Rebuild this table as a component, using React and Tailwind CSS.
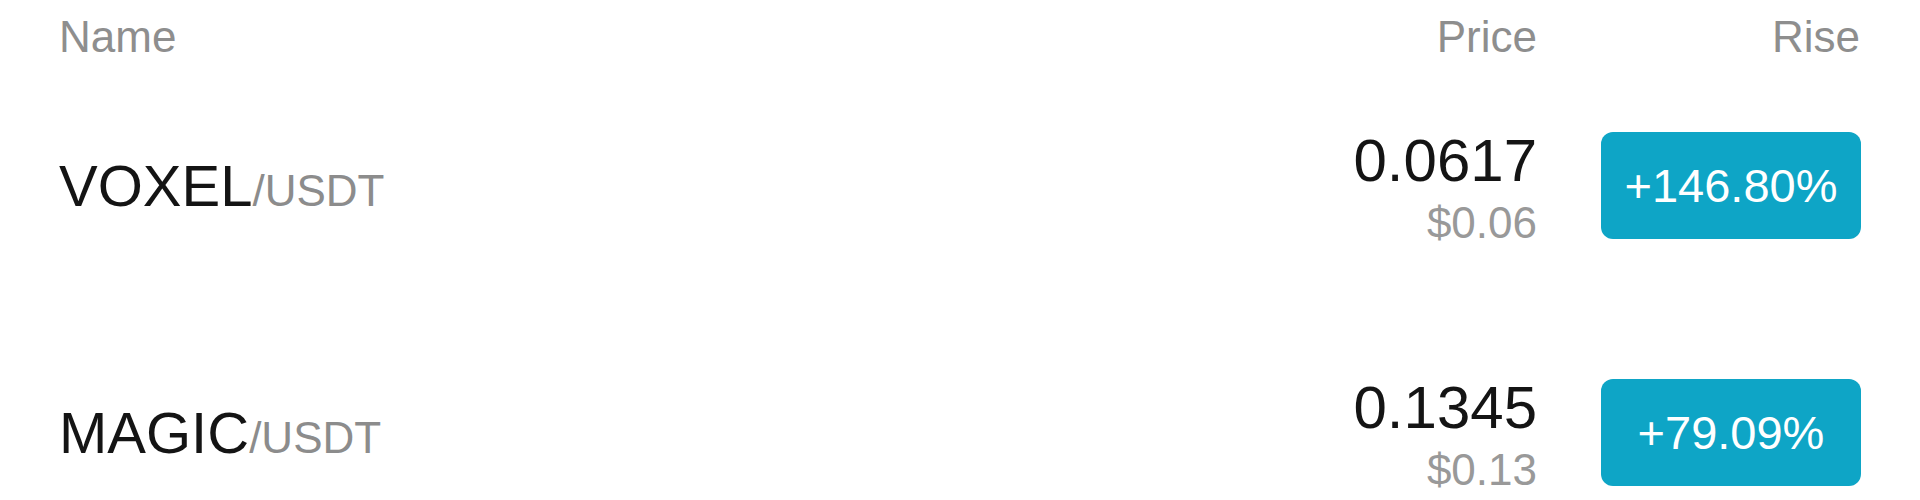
import React from 'react';

const rows = [
  { base: 'VOXEL', quote: 'USDT', price: '0.0617', usd: '$0.06', rise: '+146.80%' },
  { base: 'MAGIC', quote: 'USDT', price: '0.1345', usd: '$0.13', rise: '+79.09%' },
];

function Row({ r }) {
  return (
    <div className="flex items-center h-[247px]">
      <div className="flex-1 pt-[16px] leading-[58px] whitespace-nowrap">
        <span className="text-[58px] text-[#141414]">{r.base}</span>
        <span className="text-[44px] text-[#8c8c8c]">/{r.quote}</span>
      </div>
      <div className="flex flex-col items-end pt-[16px]">
        <div className="text-[60px] leading-[58px] text-[#141414]">{r.price}</div>
        <div className="text-[44px] leading-[66px] text-[#999999]">{r.usd}</div>
      </div>
      <div className="ml-[64px] w-[260px] h-[107px] rounded-[12px] bg-[#0ea5c6] flex items-center justify-center text-white text-[47px] leading-none">
        {r.rise}
      </div>
    </div>
  );
}

export default function App() {
  return (
    <div className="w-[1920px] h-[500px] overflow-hidden bg-white px-[59px] font-['Liberation_Sans',Arial,sans-serif]">
      <div className="flex h-[62px] pt-[15px] text-[44px] leading-[44px] text-[#8e8e8e]">
        <div className="flex-1">Name</div>
        <div className="text-right">Price</div>
        <div className="w-[260px] ml-[64px] text-right pr-px">Rise</div>
      </div>
      {rows.map((r) => (
        <Row key={r.base} r={r} />
      ))}
    </div>
  );
}
